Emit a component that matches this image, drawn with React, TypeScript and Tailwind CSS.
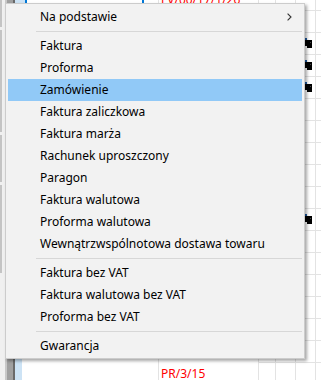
import React from "react";

const font = { fontFamily: '"Noto Sans", "Segoe UI", sans-serif' };

function PrinterIcon() {
  return (
    <svg width="8" height="11" viewBox="0 0 8 11" className="block">
      <rect x="0" y="0" width="2" height="2" fill="#1e5aa0" />
      <rect x="0" y="2" width="7" height="6" fill="#000" />
      <rect x="2" y="8" width="5" height="2" fill="#000" />
      <rect x="5" y="4" width="1" height="1" fill="#444" />
    </svg>
  );
}

type RowDef = { b?: string; icon?: boolean; top?: boolean };

function GridRow({ b, icon, top }: RowDef) {
  return (
    <div className="flex h-[22px] shrink-0">
      <div className="w-[136px] relative">
        {top && (
          <div className="flex h-full">
            <div className="w-[3px] bg-[#cde3f5]" />
            <div className="w-[2px] bg-[#0078d7]" />
            <div className="w-[115px]" />
            <div className="w-[2px] bg-[#0078d7]" />
          </div>
        )}
      </div>
      <div className="w-[100px] border-l border-[#e3e3e3] pl-[2px] flex items-center text-[12px] text-[#ff0000] leading-none whitespace-nowrap">
        {b}
      </div>
      <div className="w-[17px] border-l border-b border-[#e3e3e3]" />
      <div className="w-[20px] border-l border-b border-[#e3e3e3]" />
      <div className="w-[20px] border-l border-b border-[#e3e3e3] flex items-center pl-[9px]">
        {icon && <PrinterIcon />}
      </div>
      <div className="flex-1 border-l border-b border-[#e3e3e3]" />
    </div>
  );
}

function Item({ label, active, arrow }: { label: string; active?: boolean; arrow?: boolean }) {
  return (
    <div
      className={
        "h-[22px] flex items-center pl-[32px] pr-[10px] text-[12px] text-black leading-none " +
        (active ? "bg-[#91c9f7]" : "")
      }
    >
      <span className="flex-1 whitespace-nowrap">{label}</span>
      {arrow && (
        <svg width="5" height="8" viewBox="0 0 5 8" className="block">
          <path d="M0.6 0.6 L4 4 L0.6 7.4" fill="none" stroke="#333" strokeWidth="1.1" />
        </svg>
      )}
    </div>
  );
}

function Sep() {
  return (
    <div className="h-[7px] flex items-center ml-[28px]">
      <div className="h-px w-full bg-[#d7d7d7]" />
    </div>
  );
}

export default function App() {
  const rows: RowDef[] = [];
  for (let i = 0; i < 18; i++) {
    const r: RowDef = {};
    if (i === 0) {
      r.top = true;
      r.b = "FV/00/17/1/26";
    }
    if (i === 2 || i === 3 || i === 4 || i === 10) r.icon = true;
    if (i === 17) r.b = "PR/3/15";
    rows.push(r);
  }

  return (
    <div className="relative w-[321px] h-[380px] overflow-hidden bg-white" style={font}>
      <div className="flex h-full">
        <div className="w-[5px] bg-[#f0f0f0] flex flex-col">
          <div className="h-[27px] border-l-2 border-[#c4c4c4]" />
          <div className="h-[3px]" />
          <div className="h-[102px] border-l-2 border-[#c4c4c4]" />
          <div className="h-[3px]" />
          <div className="h-[47px] border-l-2 border-[#c4c4c4]" />
          <div className="h-[3px]" />
          <div className="h-[88px] border-l-2 border-[#c4c4c4]" />
          <div className="h-[3px]" />
          <div className="flex-1" />
        </div>
        <div className="w-[10px] bg-[#a0a0a0] border-l-2 border-r-2 border-l-[#c8c8c8] border-r-[#6a6a6a]" />
        <div className="w-[7px] bg-[#cde3f5]" />
        <div className="flex-1 flex flex-col -mt-[11px]">
          {rows.map((r, i) => (
            <GridRow key={i} {...r} />
          ))}
        </div>
      </div>

      <div className="absolute left-[5px] top-[3px] w-[300px] border border-[#cccccc] bg-[#f2f2f2] px-[2px] pt-[2px] pb-[1px] shadow-[2px_2px_3px_rgba(0,0,0,0.35)]">
        <Item label="Na podstawie" arrow />
        <Sep />
        <Item label="Faktura" />
        <Item label="Proforma" />
        <Item label="Zamówienie" active />
        <Item label="Faktura zaliczkowa" />
        <Item label="Faktura marża" />
        <Item label="Rachunek uproszczony" />
        <Item label="Paragon" />
        <Item label="Faktura walutowa" />
        <Item label="Proforma walutowa" />
        <Item label="Wewnątrzwspólnotowa dostawa towaru" />
        <Sep />
        <Item label="Faktura bez VAT" />
        <Item label="Faktura walutowa bez VAT" />
        <Item label="Proforma bez VAT" />
        <Sep />
        <Item label="Gwarancja" />
      </div>
    </div>
  );
}
